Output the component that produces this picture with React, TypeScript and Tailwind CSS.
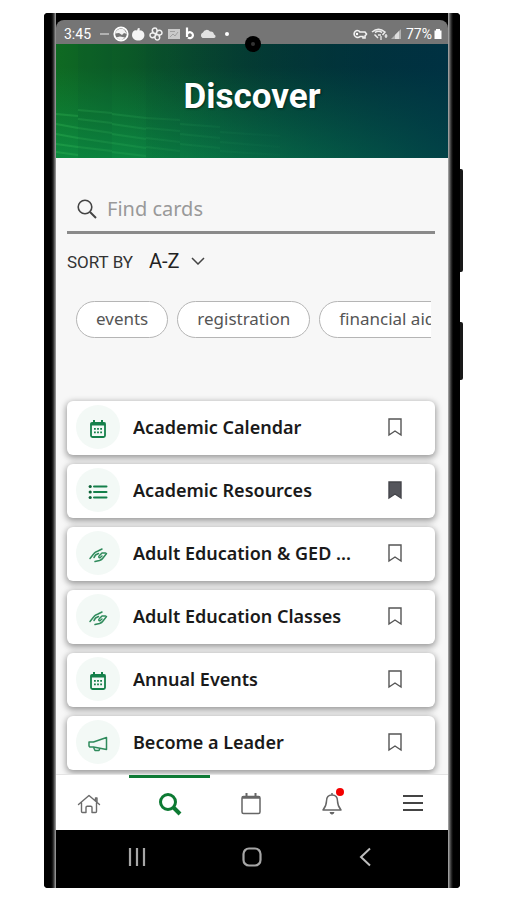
import React, { useState } from 'react';
import clsx from 'clsx';

type CardIcon = 'calendar' | 'list' | 'hands' | 'megaphone';

interface DiscoverCard {
  id: string;
  title: string;
  icon: CardIcon;
}

const CARDS: DiscoverCard[] = [
  { id: 'calendar', title: 'Academic Calendar', icon: 'calendar' },
  { id: 'resources', title: 'Academic Resources', icon: 'list' },
  { id: 'ged', title: 'Adult Education & GED ...', icon: 'hands' },
  { id: 'classes', title: 'Adult Education Classes', icon: 'hands' },
  { id: 'events', title: 'Annual Events', icon: 'calendar' },
  { id: 'leader', title: 'Become a Leader', icon: 'megaphone' }
];

const TAGS = ['events', 'registration', 'financial aid'];

const CardGlyph: React.FC<{ icon: CardIcon }> = ({ icon }) => {
  switch (icon) {
    case 'calendar':
      return (
        <svg width="18" height="20" viewBox="0 0 18 20" fill="none">
          <rect x="2" y="4" width="14" height="14" rx="1.5" stroke="#14804a" strokeWidth="1.800" />
          <path d="M1.500 3.500h15v3h-15zM4 1h2v4H4zM12 1h2v4h-2z" fill="#14804a" />
          <path
            d="M5 9h1.800v1.800H5zM8.100 9h1.800v1.800H8.100zM11.200 9H13v1.800h-1.800zM5 12.500h1.800v1.800H5zM8.100 12.500h1.800v1.800H8.100zM11.200 12.500H13v1.800h-1.800z"
            fill="#14804a"
          />
        </svg>
      );
    case 'list':
      return (
        <svg width="20" height="18" viewBox="0 0 20 18" fill="none">
          <path d="M6 3.500h12.500M6 9h12.500M6 14.500h12.500" stroke="#14804a" strokeWidth="2" strokeLinecap="round" />
          <circle cx="2.200" cy="3.500" r="1.600" fill="#0c6337" />
          <circle cx="2.200" cy="9" r="1.600" fill="#0c6337" />
          <circle cx="2.200" cy="14.500" r="1.600" fill="#0c6337" />
        </svg>
      );
    case 'hands':
      return (
        <svg width="20" height="18" viewBox="0 0 20 18" fill="none" stroke="#2f8b5c" strokeWidth="1.500" strokeLinecap="round" strokeLinejoin="round">
          <path d="M2 12.500 6 7.500C7 6 8.500 5.500 10 5l4-2" />
          <path d="M10.500 7.500 7.500 9 6 11.500" />
          <path d="M18.500 7.500 15 12c-1 1.500-2 2-3.500 2.500L7 15.500" />
          <path d="M17.500 7H14l-2.500 2.500c-1.500 1.500-.5 3 1 1.800L14 10" />
        </svg>
      );
    case 'megaphone':
      return (
        <svg width="20" height="18" viewBox="0 0 20 18" fill="none" stroke="#2f8b5c" strokeWidth="1.500" strokeLinejoin="round">
          <path d="M1 7h4.500L18.500 2.500v12L5.500 12H1.800L1 11z" />
          <path d="M5.500 12.200 7 15.500h4l.8-2" />
        </svg>
      );
  }
};

const StatusBar: React.FC = () => (
  <div className="relative z-10 flex h-6 items-center justify-between rounded-t-lg bg-[#757575] pt-1 pr-1.5 pl-2 text-white">
    <div className="flex items-center gap-1">
      <span className="mr-1 text-[14px] leading-5">3:45</span>
      <svg width="132" height="18" viewBox="0 0 132 18" fill="none">
        <path d="M1 9h9" stroke="#d2d2d2" strokeWidth="1.300" />
        <circle cx="22" cy="9" r="6.700" stroke="#fff" strokeWidth="1.800" />
        <path d="M16 8.500c1-4 6-6 9-4l3 4.500-3-1-2 2-3-2zM17 12.500l4-1 5 1-4 3z" fill="#f2f2f2" />
        <path d="M33 10c0-4 3-5.500 5-4.500l1-2.500 2 .5-.6 1.800c3 0 5 1.700 5 4.700 0 3.500-2.500 5.500-6 5.500s-6.400-2-6.400-5.500z" fill="#f4f4f4" />
        <path
          d="M57 9c-5-1-4.500-6-1-6 2 0 3 3 1 6zM57 9c1-5 6-4.500 6-1 0 2-3 3-6 1zM57 9c5 1 4.500 6 1 6-2 0-3-3-1-6zM57 9c-1 5-6 4.500-6 1 0-2 3-3 6-1z"
          stroke="#f2f2f2"
          strokeWidth="1.500"
        />
        <rect x="69" y="4" width="12" height="10" fill="#c9c9c9" />
        <path d="M71 6.500h5M71 12l3-3 2 2 3-4" stroke="#a0a0a0" />
        <path d="M88 2.500v9.500M88 9.500a3 3 0 1 1 1 3" stroke="#fff" strokeWidth="2.200" />
        <path d="M103.500 13a3 3 0 0 1 .5-5.500 4 4 0 0 1 7-1 3.500 3.500 0 0 1 4 3c2 .5 2 3.500 0 3.500z" fill="#e2e2e2" />
        <circle cx="128" cy="9" r="2" fill="#fff" />
      </svg>
    </div>
    <div className="flex items-center gap-1">
      <svg width="50" height="16" viewBox="0 0 50 16" fill="none">
        <path d="M5 4.500a3.500 3.500 0 1 0 3 6h3V12h2v-2l1.500-2L13 6H8a3.500 3.500 0 0 0-3-1.500z" stroke="#f1f1f1" strokeWidth="1.600" />
        <circle cx="5" cy="8" r="1.200" fill="#fff" />
        <path d="M20 6c4-3.500 9-3.500 13 0l-2.500 3M22.500 8.500 26 12M23 6.500c2-1.300 5-1.300 7 0M26 9h3" stroke="#ececec" strokeWidth="1.500" />
        <path d="M29 10v4M34 8v4M32.500 10h3" stroke="#f5f5f5" strokeWidth="1.200" />
        <path d="M39 13h10V3z" fill="#b0b0b0" />
        <path d="M43 13h4V5l-4 4z" fill="#ddd" />
      </svg>
      <span className="text-[14px] leading-5">77%</span>
      <svg className="-ml-0.5" width="8" height="12" viewBox="0 0 8 12">
        <path d="M2 1h4v1.500h1.500V11h-7V2.500H2z" fill="#fff" />
      </svg>
    </div>
    <div className="absolute top-4 left-1/2 ml-px flex size-4 -translate-x-1/2 items-center justify-center rounded-full bg-black">
      <span className="size-1 rounded-full bg-[#333]" />
    </div>
  </div>
);

const Header: React.FC = () => (
  <header className="relative flex h-[114px] items-center justify-center overflow-hidden bg-linear-to-r from-[#0f6a22] via-[#063d2a] to-[#00232c]">
    <div className="absolute inset-0 bg-linear-to-t from-[#0c9a4c]/70 to-transparent to-80%" />
    <div className="absolute inset-0 bg-linear-to-r from-transparent from-20% to-[#003548]/80" />
    <svg className="absolute inset-0 size-full" viewBox="0 0 392 114" preserveAspectRatio="none" fill="none">
      <defs>
        <linearGradient id="streak" gradientUnits="userSpaceOnUse" x1="0" x2="260" y1="0" y2="0">
          <stop offset="0" stopColor="#4fe06a" stopOpacity=".2" />
          <stop offset="1" stopColor="#2aa070" stopOpacity="0" />
        </linearGradient>
      </defs>
      <g stroke="url(#streak)" strokeWidth="2">
        <path d="M0 70l22 2M0 80l22 4M0 90l22 4M0 100l22 3M0 108l22 3" />
        <path d="M22 66l34 3M22 75l34 4M22 84l34 5M22 94l34 5M22 103l34 4" />
        <path d="M56 70l34 4M56 80l34 5M56 90l34 5M56 99l34 5M56 108l34 4" />
        <path d="M90 74l34 2M90 84l34 3M90 94l34 4M90 103l34 4" />
        <path d="M124 80l40 3M124 90l40 4M124 100l40 4M164 88l60 4M164 98l60 5M164 107l60 4" />
      </g>
      <path d="M22 0h34v114H22zM90 0h34v114H90z" fill="#0a5030" opacity=".1" />
    </svg>
    <h1 className="relative mb-3 pt-1 text-[35px] leading-10 font-bold text-white [text-shadow:1px_1px_2px_rgba(0,0,0,0.5)]">
      Discover
    </h1>
  </header>
);

const NAV_ITEMS = [
  {
    label: 'Home',
    icon: (
      <svg width="24" height="24" viewBox="0 0 24 24" fill="none" stroke="#6b6b6b" strokeWidth="1.400" strokeLinejoin="round" strokeLinecap="round">
        <path d="M1.500 12.500 12 3.500l10.500 9M18.500 8.500V6H20v4M4.500 11v8.500c0 .6.300 1 1 1h3.500v-5c0-.8.400-1.200 1.200-1.200h3.600c.8 0 1.200.4 1.200 1.200v5h3.500c.7 0 1-.4 1-1V11" />
      </svg>
    )
  },
  {
    label: 'Discover',
    icon: (
      <svg width="24" height="24" viewBox="0 0 24 24" fill="none" stroke="#0d7a33">
        <circle cx="10" cy="10" r="7.500" strokeWidth="3" />
        <path d="m15.500 15.500 6.500 6.500" strokeWidth="4" />
      </svg>
    )
  },
  {
    label: 'Calendar',
    icon: (
      <svg width="24" height="24" viewBox="0 0 24 24" fill="none" stroke="#666">
        <rect x="3" y="4.500" width="18" height="17" rx="1.500" strokeWidth="1.500" />
        <path d="M3 5.500h18" strokeWidth="2.500" />
        <path d="M7.500 1v4M16.500 1v4" strokeWidth="2" />
      </svg>
    )
  },
  {
    label: 'Notifications',
    icon: (
      <svg width="24" height="24" viewBox="0 0 24 24" fill="none" stroke="#666" strokeWidth="1.500" strokeLinejoin="round">
        <path d="M12 1v2M12 3c-3.600 0-5.500 2.600-5.500 6 0 4.500-1.500 6.500-3.500 9h18c-2-2.500-3.500-4.500-3.500-9 0-3.400-1.900-6-5.500-6z" />
        <path d="M10 20.500c.5 2 3.500 2 4 0z" fill="#666" strokeWidth="1" />
      </svg>
    )
  },
  {
    label: 'Menu',
    icon: (
      <svg width="24" height="24" viewBox="0 0 24 24" stroke="#444" strokeWidth="1.800">
        <path d="M2 4h20M2 11h20M2 18h20" />
      </svg>
    )
  }
];

const BottomNav: React.FC = () => (
  <nav className="overflow-hidden border-t border-[#e4e4e4] bg-white">
    <div className="-mr-1.5 -ml-2 grid grid-cols-5">
      {NAV_ITEMS.map(item => (
        <button
          key={item.label}
          aria-label={item.label}
          className={clsx(
            'flex h-[55px] items-center justify-center border-t-[3px]',
            item.label === 'Discover' ? 'border-[#0f7a35]' : 'border-transparent'
          )}
        >
          <span className="relative">
            {item.icon}
            {item.label === 'Notifications' && (
              <span className="absolute -top-1 right-0 size-2 rounded-full bg-[#f40000]" />
            )}
          </span>
        </button>
      ))}
    </div>
  </nav>
);

const SystemNav: React.FC = () => (
  <div className="grid h-[50px] grid-cols-3 rounded-b-lg bg-black px-6">
    <button aria-label="Recent apps" className="flex items-center justify-center pt-1">
      <svg width="20" height="20" viewBox="0 0 20 20" stroke="#a6a6a6" strokeWidth="2.200">
        <path d="M3 1v18M10 1v18M17 1v18" />
      </svg>
    </button>
    <button aria-label="Home screen" className="flex items-center justify-center pt-1">
      <svg width="20" height="20" viewBox="0 0 20 20" fill="none" stroke="#a6a6a6" strokeWidth="2.200">
        <rect x="1.500" y="1.500" width="17" height="17" rx="5.500" />
      </svg>
    </button>
    <button aria-label="Back" className="flex items-center justify-center pt-1">
      <svg width="20" height="20" viewBox="0 0 20 20" fill="none" stroke="#bdbdbd" strokeWidth="2">
        <path d="M13 1.500 4 10l9 8.500" />
      </svg>
    </button>
  </div>
);

const App: React.FC = () => {
  const [saved, setSaved] = useState<string[]>(['resources']);

  const toggleSaved = (id: string) => {
    setSaved(prev => (prev.includes(id) ? prev.filter(s => s !== id) : [...prev, id]));
  };

  return (
    <div className="min-h-screen bg-white pt-[13px] pr-[46px] pb-3 pl-11 font-['Roboto',sans-serif]">
      <div className="relative rounded-sm bg-black pt-[7px] pb-2">
        {/* Metal rim on both sides of the screen */}
        <div className="absolute inset-y-0 left-0 w-3 rounded-l-sm bg-linear-to-r from-black from-50% via-[#222] via-75% to-[#a8a8a8]" />
        <div className="absolute inset-y-0 right-0 w-3 rounded-r-sm bg-linear-to-l from-black from-50% via-[#333] via-75% to-[#b4b4b4]" />
        <div className="absolute top-[156px] -right-[3px] h-[103px] w-[3px] rounded-r-xs bg-[#181818]" />
        <div className="absolute top-[309px] -right-[3px] h-[58px] w-[3px] rounded-r-xs bg-[#181818]" />

        <div className="relative mx-3">
          <StatusBar />
          <Header />

          <main className="overflow-hidden bg-[#f7f7f7] pt-[26px] pr-[13px] pb-1 pl-[11px]">
            <label className="flex h-[50px] items-center border-b-[3px] border-[#8a8a8a] pt-0.5 pl-2">
              <svg className="shrink-0" width="24" height="24" viewBox="0 0 24 24" fill="none" stroke="#444" strokeWidth="1.600">
                <circle cx="10" cy="10" r="6.800" />
                <path d="m15 15 6 6" strokeWidth="2" />
              </svg>
              <input
                type="text"
                aria-label="Find cards"
                placeholder="Find cards"
                className="ml-2 h-8 w-full bg-transparent font-['Noto_Sans',sans-serif] text-[20px] leading-8 text-[#444] outline-none placeholder:text-[#999]"
              />
            </label>

            <div className="flex h-14 items-center">
              <label htmlFor="sort" className="text-[17px] leading-6 text-[#333]">
                SORT BY
              </label>
              <div className="relative ml-4">
                <select
                  id="sort"
                  defaultValue="az"
                  className="w-[60px] appearance-none bg-transparent text-[20px] leading-6 text-[#222] outline-none"
                >
                  <option value="az">A-Z</option>
                  <option value="za">Z-A</option>
                </select>
                <svg className="pointer-events-none absolute top-2 right-1 h-2 w-3.5" viewBox="0 0 14 8" fill="none" stroke="#444" strokeWidth="1.500">
                  <path d="m1 1 6 6 6-6" />
                </svg>
              </div>
            </div>

            <div className="mt-[11px] mr-1 ml-[9px] flex gap-[9px] overflow-hidden">
              {TAGS.map(tag => (
                <button
                  key={tag}
                  className="h-[37px] shrink-0 rounded-full border border-[#b5b5b5] bg-white px-[19px] pb-0.5 font-['Noto_Sans',sans-serif] text-[17px] leading-6 text-[#555]"
                >
                  {tag}
                </button>
              ))}
            </div>

            <ul className="mt-[63px] flex flex-col gap-[9px]">
              {CARDS.map(card => {
                const isSaved = saved.includes(card.id);
                return (
                  <li
                    key={card.id}
                    className="flex h-[54px] items-center rounded-md bg-white pr-7 pb-0.5 pl-[9px] shadow-[0_2px_6px_1px_rgba(0,0,0,0.38)]"
                  >
                    <span className="flex size-11 shrink-0 items-center justify-center rounded-full bg-[#f3f9f6] pt-1">
                      <CardGlyph icon={card.icon} />
                    </span>
                    <a
                      href={`#${card.id}`}
                      className="ml-[13px] flex-1 truncate font-['Noto_Sans',sans-serif] text-[18px] leading-7 font-semibold text-[#1a1a1a]"
                    >
                      {card.title}
                    </a>
                    <button
                      aria-label={`Save ${card.title}`}
                      aria-pressed={isSaved}
                      onClick={() => toggleSaved(card.id)}
                      className="flex size-6 shrink-0 items-center justify-center"
                    >
                      <svg width="14" height="20" viewBox="0 0 14 20" fill={isSaved ? '#55565c' : 'none'} stroke={isSaved ? '#44454a' : '#555'} strokeWidth="1.400">
                        <path d="M1 2h12v16l-6-4-6 4z" />
                      </svg>
                    </button>
                  </li>
                );
              })}
            </ul>
          </main>

          <BottomNav />
          <SystemNav />
        </div>
      </div>
    </div>
  );
};

export default App;
